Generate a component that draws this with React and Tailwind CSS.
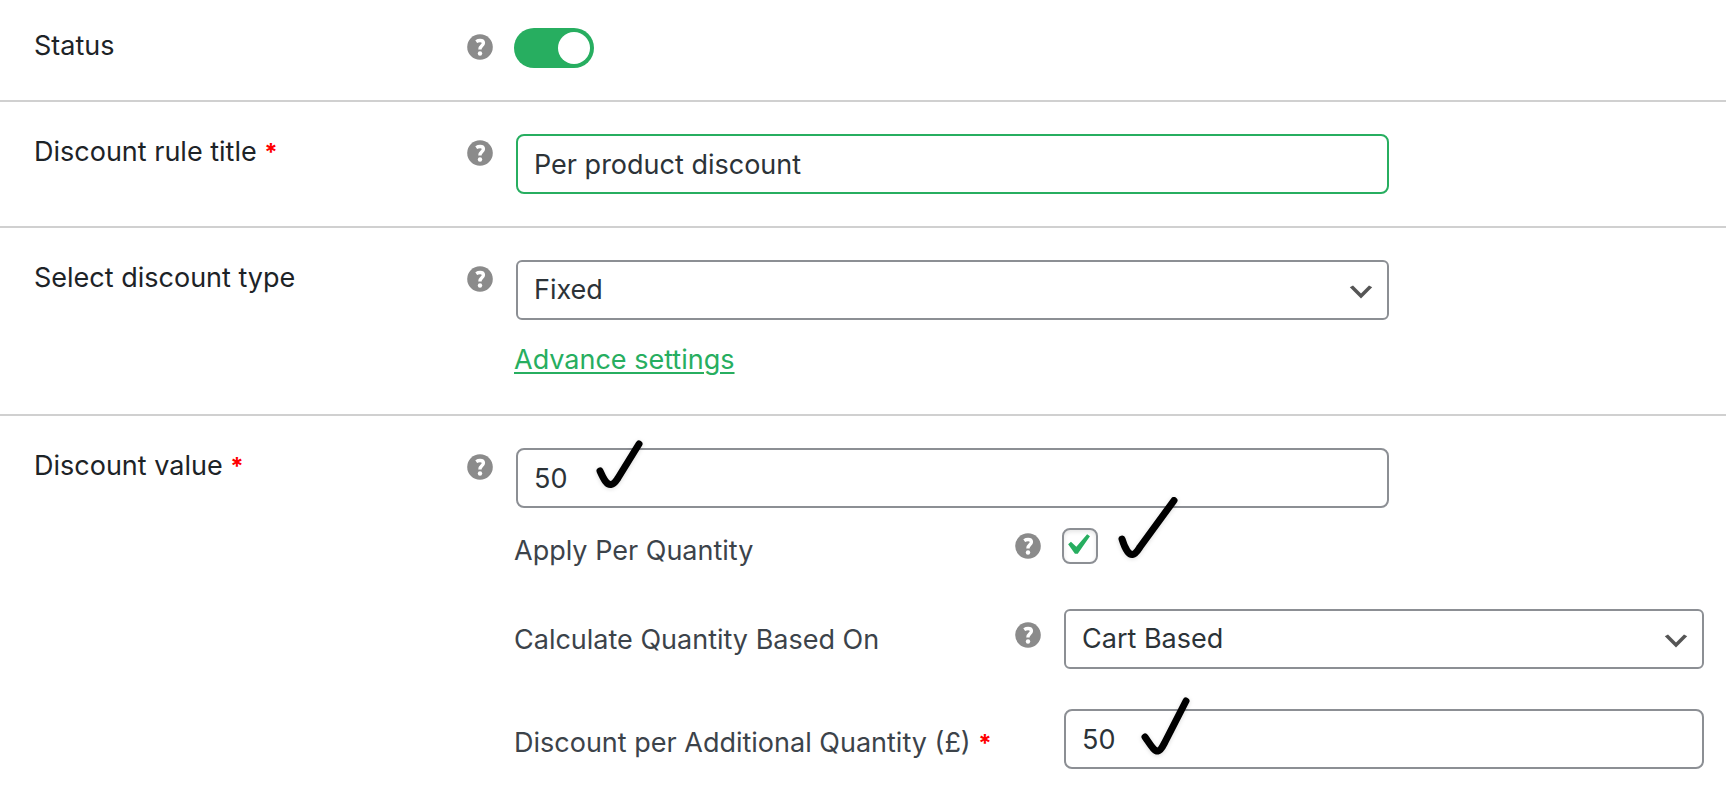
import { useState } from 'react';

const HelpTip = ({ text, className }) => (
  <button type="button" aria-label={text} className={`h-7 w-7 ${className}`}>
    <svg className="h-7 w-7" viewBox="0 0 28 28" fill="none">
      <circle cx="14" cy="14" r="12.8" fill="#8b8b8b" />
      <path d="M10.2 8.6c1.3-.8 2.5-1.1 3.9-1.1 2.1 0 3.3 1 3.3 2.6 0 2.8-3.5 2.7-3.5 6.3" stroke="#fff" strokeWidth="3.4" />
      <circle cx="14" cy="20.5" r="2.2" fill="#fff" />
    </svg>
  </button>
);

const Required = () => <span className="text-2xl font-bold text-[#ff0000]">*</span>;

// Hand drawn tick that sits on top of a field
const Mark = ({ d, viewBox, className }) => (
  <svg className={`pointer-events-none absolute drop-shadow-sm ${className}`} viewBox={viewBox} fill="none" aria-hidden="true">
    <path d={d} stroke="#000" strokeWidth="7" strokeLinecap="round" strokeLinejoin="round" />
  </svg>
);

const Row = ({ label, htmlFor, required, help, children, className = 'py-8' }) => (
  <div className={`grid grid-cols-[432px_48px_minmax(0,1fr)] border-b-2 border-[#d0d0d0] pl-[34px] pr-[22px] last:border-b-0 ${className}`}>
    <label htmlFor={htmlFor} className="leading-9">
      {label} {required && <Required />}
    </label>
    <HelpTip text={help} className="mt-[5px]" />
    <div>{children}</div>
  </div>
);

const SelectBox = ({ id, value, onChange, options }) => (
  <div className="relative">
    <select
      id={id}
      value={value}
      onChange={(e) => onChange(e.target.value)}
      className="block h-[60px] w-full appearance-none rounded-md border-2 border-[#8c8f94] bg-white px-4 text-[#2c3338]"
    >
      {options.map((option) => (
        <option key={option}>{option}</option>
      ))}
    </select>
    <svg className="pointer-events-none absolute right-3 top-4 h-8 w-8" viewBox="0 0 20 20" aria-hidden="true">
      <path d="M5 6l5 5 5-5 2 1-7 7-7-7 2-1z" fill="#555" />
    </svg>
  </div>
);

const TextBox = ({ id, value, onChange, className = 'border-[#8c8f94]' }) => (
  <input
    id={id}
    type="text"
    value={value}
    onChange={(e) => onChange(e.target.value)}
    className={`block h-[60px] w-full rounded-lg border-2 bg-white px-4 text-[#2c3338] outline-none ${className}`}
  />
);

export default function App() {
  const [enabled, setEnabled] = useState(true);
  const [title, setTitle] = useState('Per product discount');
  const [type, setType] = useState('Fixed');
  const [value, setValue] = useState('50');
  const [perQuantity, setPerQuantity] = useState(true);
  const [basedOn, setBasedOn] = useState('Cart Based');
  const [additional, setAdditional] = useState('50');

  return (
    <form className="min-h-screen bg-white font-['Inter','Liberation_Sans',sans-serif] text-[27px] text-[#1d2327]">
      <Row label="Status" htmlFor="status" help="Enable or disable this rule" className="pb-8 pt-7">
        <div className="relative h-10 w-20">
          <input
            id="status"
            type="checkbox"
            role="switch"
            checked={enabled}
            onChange={(e) => setEnabled(e.target.checked)}
            className="peer block h-10 w-20 appearance-none rounded-full bg-gray-400 checked:bg-[#27ae60]"
          />
          <span className="pointer-events-none absolute left-1 top-1 h-8 w-8 rounded-full bg-white peer-checked:left-11" />
        </div>
      </Row>

      <Row label="Discount rule title" htmlFor="title" required help="Title of the discount rule">
        <div className="ml-0.5 max-w-[873px]">
          <TextBox id="title" value={title} onChange={setTitle} className="border-[#27ae60]" />
        </div>
      </Row>

      <Row label="Select discount type" htmlFor="type" help="Type of discount">
        <div className="ml-0.5 max-w-[873px]">
          <SelectBox id="type" value={type} onChange={setType} options={['Fixed', 'Percentage']} />
        </div>
        <a href="#" className="mb-0.5 mt-5 block w-fit leading-10 text-[#27ae60] underline decoration-2 underline-offset-3">
          Advance settings
        </a>
      </Row>

      <Row label="Discount value" htmlFor="value" required help="Value of the discount" className="pb-5 pt-8">
        <div className="relative ml-0.5 max-w-[873px]">
          <TextBox id="value" value={value} onChange={setValue} />
          <Mark className="-top-4 left-[74px] h-[60px] w-[60px]" viewBox="590 432 60 60" d="M600 471C604 480 607 485 611 484.5C614.5 484 616 481 618 478L639 444" />
        </div>

        <div className="mt-5 text-[#3c434a]">
          <div className="grid grid-cols-[500px_48px_minmax(0,1fr)]">
            <label htmlFor="per-quantity" className="mt-[5px] leading-9">Apply Per Quantity</label>
            <HelpTip text="Apply the discount for each quantity" className="mt-1" />
            <div className="relative h-9">
              <input
                id="per-quantity"
                type="checkbox"
                checked={perQuantity}
                onChange={(e) => setPerQuantity(e.target.checked)}
                className="peer block h-9 w-9 appearance-none rounded-lg border-2 border-[#8c8f94] bg-white shadow-[inset_0_2px_4px_rgba(0,0,0,0.1)]"
              />
              <svg className="pointer-events-none invisible absolute -left-1.5 -top-1 h-[42px] w-[42px] peer-checked:visible" viewBox="0 0 20 20" aria-hidden="true">
                <path d="M14.83 4.89l1.34.94-5.81 8.38H9.02L5.78 9.67l1.34-1.25 2.57 2.4z" fill="#27ae60" />
              </svg>
              <Mark className="-top-9 left-12 h-[76px] w-[76px]" viewBox="1110 492 76 76" d="M1122 539C1125 549 1129 555 1132.5 554.5C1136 554 1138 550 1140 547L1174 500.5" />
            </div>
          </div>

          <div className="mt-10 grid grid-cols-[500px_48px_minmax(0,1fr)]">
            <label htmlFor="based-on" className="mt-[13px] leading-9">Calculate Quantity Based On</label>
            <HelpTip text="How the quantity is counted" className="mt-3" />
            <div className="ml-0.5">
              <SelectBox id="based-on" value={basedOn} onChange={setBasedOn} options={['Cart Based', 'Product Based']} />
            </div>
          </div>

          <div className="mt-10 grid grid-cols-[548px_minmax(0,1fr)]">
            <label htmlFor="additional" className="mt-4 leading-9">
              Discount per Additional Quantity (£) <Required />
            </label>
            <div className="relative ml-0.5">
              <TextBox id="additional" value={additional} onChange={setAdditional} />
              <Mark className="-top-5 left-[70px] h-[72px] w-16" viewBox="1134 689 64 72" d="M1145 737C1150 744 1154 751.5 1158 751C1161 750.5 1163 746 1165 742L1186 701" />
            </div>
          </div>
        </div>
      </Row>
    </form>
  );
}
